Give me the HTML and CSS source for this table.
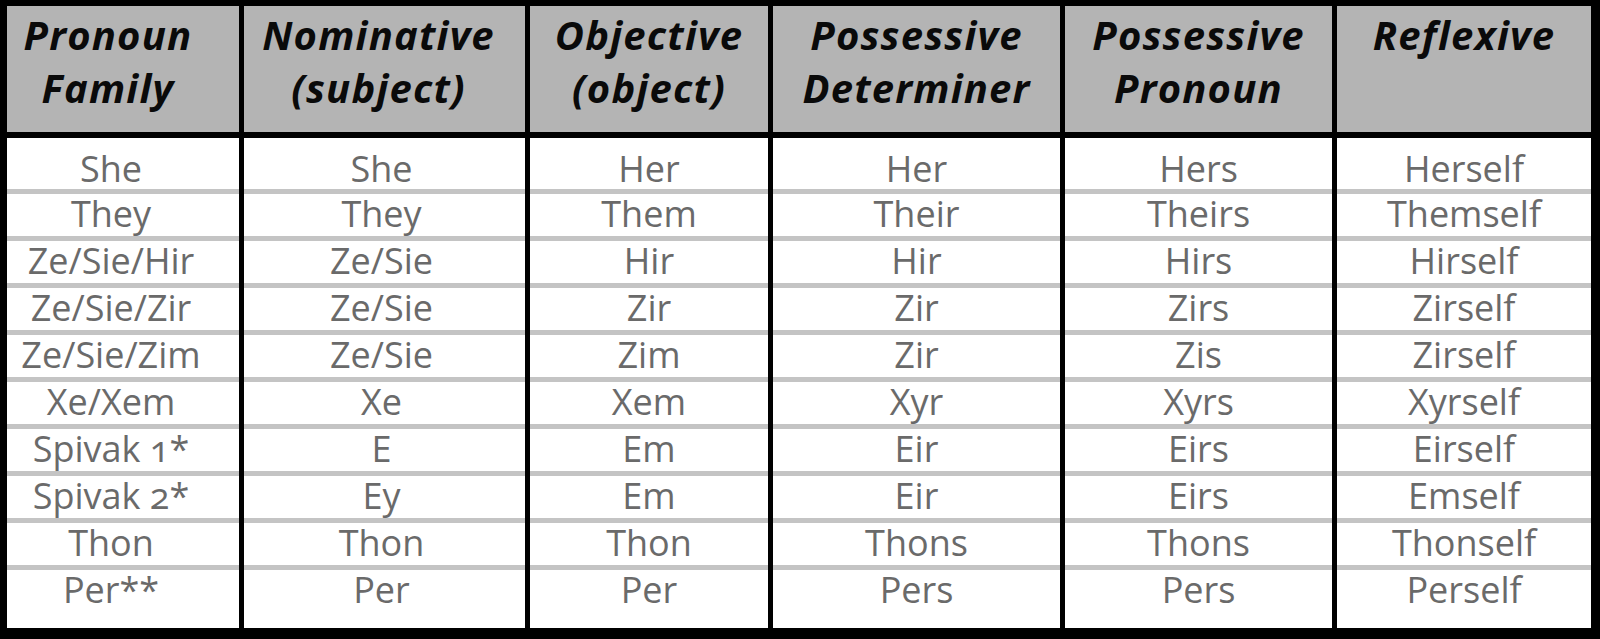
FILE: index.html
```html
<!DOCTYPE html>
<html lang="en">
<head>
<meta charset="utf-8">
<title>Pronoun Table</title>
<link rel="stylesheet" href="styles.css">
</head>
<body>
<div class="frame">
  <div class="table">
    <div class="hcell h1">Pronoun<br>Family</div>
    <div class="hcell h2">Nominative<br>(subject)</div>
    <div class="hcell">Objective<br>(object)</div>
    <div class="hcell">Possessive<br>Determiner</div>
    <div class="hcell">Possessive<br>Pronoun</div>
    <div class="hcell">Reflexive</div>

    <div class="cell c1 first">She</div><div class="cell c2 first">She</div><div class="cell first">Her</div><div class="cell first">Her</div><div class="cell first">Hers</div><div class="cell first">Herself</div>
    <div class="cell c1">They</div><div class="cell c2">They</div><div class="cell">Them</div><div class="cell">Their</div><div class="cell">Theirs</div><div class="cell">Themself</div>
    <div class="cell c1">Ze/Sie/Hir</div><div class="cell c2">Ze/Sie</div><div class="cell">Hir</div><div class="cell">Hir</div><div class="cell">Hirs</div><div class="cell">Hirself</div>
    <div class="cell c1">Ze/Sie/Zir</div><div class="cell c2">Ze/Sie</div><div class="cell">Zir</div><div class="cell">Zir</div><div class="cell">Zirs</div><div class="cell">Zirself</div>
    <div class="cell c1">Ze/Sie/Zim</div><div class="cell c2">Ze/Sie</div><div class="cell">Zim</div><div class="cell">Zir</div><div class="cell">Zis</div><div class="cell">Zirself</div>
    <div class="cell c1">Xe/Xem</div><div class="cell c2">Xe</div><div class="cell">Xem</div><div class="cell">Xyr</div><div class="cell">Xyrs</div><div class="cell">Xyrself</div>
    <div class="cell c1">Spivak 1*</div><div class="cell c2">E</div><div class="cell">Em</div><div class="cell">Eir</div><div class="cell">Eirs</div><div class="cell">Eirself</div>
    <div class="cell c1">Spivak 2*</div><div class="cell c2">Ey</div><div class="cell">Em</div><div class="cell">Eir</div><div class="cell">Eirs</div><div class="cell">Emself</div>
    <div class="cell c1">Thon</div><div class="cell c2">Thon</div><div class="cell">Thon</div><div class="cell">Thons</div><div class="cell">Thons</div><div class="cell">Thonself</div>
    <div class="cell c1 last">Per**</div><div class="cell c2 last">Per</div><div class="cell last">Per</div><div class="cell last">Pers</div><div class="cell last">Pers</div><div class="cell last">Perself</div>
  </div>
</div>
</body>
</html>
```

FILE: styles.css
```css
html, body {
  margin: 0;
  padding: 0;
  background: #000;
}
.frame {
  width: 1600px;
  height: 639px;
  box-sizing: border-box;
  padding: 6px 9px 11px 7px;
  background: #000;
}
.table {
  display: grid;
  grid-template-columns: 232px 281px 238px 287px 267px 254px;
  grid-template-rows: 132px 56px repeat(8, 47px) 58px;
  column-gap: 5px;
  row-gap: 0;
  font-family: "Open Sans", "DejaVu Sans", sans-serif;
}
.hcell {
  background: #b4b4b4;
  color: #0a0a0a;
  font-weight: 700;
  font-style: italic;
  font-size: 40px;
  line-height: 53px;
  letter-spacing: 1.2px;
  text-align: center;
  padding: 2px 0 0 0;
  margin-bottom: 6px;
  white-space: nowrap;
}
.hcell.h1 { padding-right: 30px; }
.hcell.h2 { padding-right: 12px; }
.cell {
  background: #fff;
  color: #6a6a6a;
  font-size: 36px;
  line-height: 40px;
  text-align: center;
  border-bottom: 5px solid #c4c4c4;
  white-space: nowrap;
  font-variant-numeric: oldstyle-nums;
}
.cell.c1 { padding-right: 24px; }
.cell.c2 { padding-right: 6px; }
.cell.first {
  padding-top: 11px;
}
.cell.last {
  border-bottom: none;
}
```
